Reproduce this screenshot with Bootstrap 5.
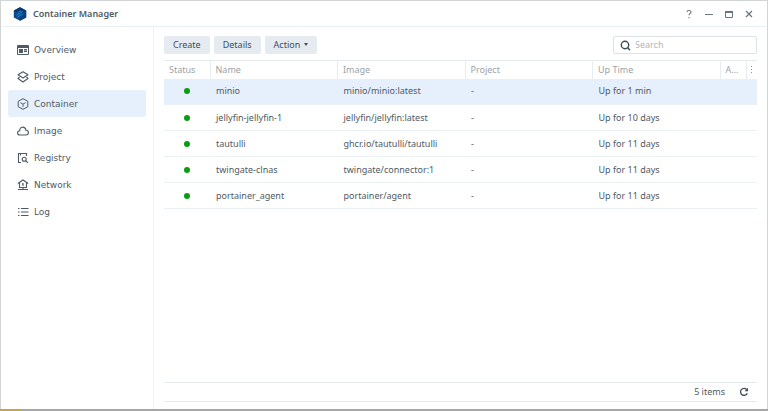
<!DOCTYPE html>
<html lang="en">
<head>
<meta charset="utf-8">
<meta name="viewport" content="width=device-width, initial-scale=1">
<title>Container Manager</title>
<link href="https://cdn.jsdelivr.net/npm/bootstrap@5.3.0/dist/css/bootstrap.min.css" rel="stylesheet">
<style>
body{font-family:"Noto Sans",Verdana,sans-serif;font-size:9px;line-height:12px;color:#505a64;padding-bottom:2px;background:linear-gradient(to right,#c4a548 21px,#a6a6a6 21px)}
.app-window{background:#fff;border:1px solid #d2d4d6;border-bottom:0}
.title-bar{height:26px;padding:0 8px 0 12px;border-bottom:1px solid #eaf2f6}
.title-bar .brand{gap:6px}
.title-bar h1{font-size:9px;line-height:12px;font-weight:600;color:#505a64}
.win-btn{width:20px;height:20px;color:#6b737b}
.win-btn,.refresh-btn{border:0;background:none;padding:0}
.side-nav{width:153px;padding:9px 7px;border-right:1px solid #eaf2f6}
.side-nav .nav-link{height:27px;padding:0 9px;gap:5px;font-family:"DejaVu Sans",Verdana,sans-serif;font-size:9px;line-height:12px;color:#505a64;border-radius:3px}
.side-nav .nav-link.active{background:#e5f0fc;color:#505a64}
.side-nav svg{width:12px;height:12px}
svg{display:block;flex:none}
.main-pane{padding:9px 10px 7px}
.tool-bar{gap:4px;margin-bottom:6px}
.tool-btn{height:18px;padding:0 9px;border:0;border-radius:2px;background:#e6ebf2;color:#414b55;font-size:9px;line-height:12px}
.tool-btn.dropdown-toggle::after{border-top-width:3px;border-left-width:2px;border-right-width:2px;vertical-align:2px;margin-left:4px}
.search-box{width:144px;height:18px;padding:0 6px;gap:4px;border:1px solid #dde3e8;border-radius:2px}
.search-box input{font-size:9px;line-height:12px;padding:0;border:0;background:none;color:#505a64;min-width:0}
.search-box input::placeholder{color:#b0b6bb}
.search-box input:focus{box-shadow:none}
.grid{table-layout:fixed;--bs-table-bg:transparent;color:#505a64;border-top:1px solid #e4e9ed}
.grid>thead th{height:18px;padding:0 5px;font-weight:400;color:#9ba2a8;border:0;border-right:1px solid #e8edf1;white-space:nowrap;overflow:hidden}
.grid>thead th:last-child{border-right:0;padding:0}
.grid>tbody td{height:26px;padding:0 6px;color:#505a64;border-bottom:1px solid #eaf1f5}
.grid .picked td{background:#e5f0fc}
.c-status{width:46px}.c-more{width:26px}.c-menu{width:11px}
.led{width:6px;height:6px;background:#0a9c12}
.status-bar{height:20px;padding-right:8px;gap:14px;border-top:1px solid #e8ebee;border-bottom:1px solid #e8ebee}
</style>
</head>
<body class="d-flex flex-column min-vh-100">
<div class="app-window d-flex flex-column flex-grow-1">
  <header class="title-bar d-flex align-items-center">
    <div class="brand d-flex align-items-center me-auto">
      <svg width="14" height="14" viewBox="0 0 14 14"><path d="M7 .3 13.2 3.6v6.8L7 13.7.8 10.4V3.6z" fill="#0a4a91"/><path d="M7 .3 13.2 3.6 7 7 .8 3.6z" fill="#0c3a70"/><path d="M7 7l6.2-3.4v6.8L7 13.7z" fill="#08417f"/><path d="M3.5 8.2 10 4.4M4.2 10.2l5.9-3.4M5 5.4l3-1.5" stroke="#2287cb" stroke-width="1"/></svg>
      <h1 class="mb-0">Container Manager</h1>
    </div>
    <button class="win-btn d-flex align-items-center justify-content-center" aria-label="Help"><svg width="10" height="10" viewBox="0 0 10 10" fill="none" stroke="currentColor" stroke-width="1.1"><path d="M3 3C3 1 7 .9 7 3c0 1.4-2 1.4-2 3.3M5 8v1.2"/></svg></button>
    <button class="win-btn d-flex align-items-center justify-content-center" aria-label="Minimize"><svg width="10" height="10" viewBox="0 0 10 10"><path d="M1 5.500h8" stroke="currentColor"/></svg></button>
    <button class="win-btn d-flex align-items-center justify-content-center" aria-label="Maximize"><svg width="10" height="10" viewBox="0 0 10 10" fill="none" stroke="currentColor"><path d="M1.500 2.500h7v6h-7z"/><path d="M1 3h8" stroke-width="2"/></svg></button>
    <button class="win-btn d-flex align-items-center justify-content-center" aria-label="Close"><svg width="10" height="10" viewBox="0 0 10 10"><path d="m2 2 6 6M8 2 2 8" stroke="currentColor" stroke-width="1.2"/></svg></button>
  </header>
  <div class="d-flex flex-grow-1">
    <nav class="side-nav nav flex-column flex-nowrap flex-shrink-0" aria-label="Sections">
      <a class="nav-link d-flex align-items-center" href="#"><svg viewBox="0 0 12 12"><path fill="none" stroke="currentColor" d="M.5 1.5h11v9H.5z"/><path fill="currentColor" d="M1 2h10v2H1zM2 5h4v4H2zM7 5h3v1.500H7zM7 7h3v1H7z"/></svg>Overview</a>
      <a class="nav-link d-flex align-items-center" href="#"><svg viewBox="0 0 12 12" fill="none" stroke="currentColor" stroke-width="1.1" stroke-linejoin="round"><path d="M6 .8 11 3.800 6 7 1 3.800zM2.500 6 1 7.500l5 3.500 5-3.500L9.500 6"/></svg>Project</a>
      <a class="nav-link active d-flex align-items-center" aria-current="page" href="#"><svg viewBox="0 0 12 12" fill="none" stroke="currentColor" stroke-linejoin="round"><path d="M6 .7 10.800 3.300v5.400L6 11.300 1.200 8.700V3.300z"/><path d="M3.300 4.700 6 6.100l2.700-1.400M6 6.100V9" stroke-width=".9"/></svg>Container</a>
      <a class="nav-link d-flex align-items-center" href="#"><svg viewBox="0 0 12 12" fill="none" stroke="currentColor" stroke-width="1.100"><path d="M3 10C-.3 10-.1 6 2.700 5.800 2.700 1.100 8.300 1 9 5.300c3.300.3 3.300 4.700-.2 4.700z"/></svg>Image</a>
      <a class="nav-link d-flex align-items-center" href="#"><svg viewBox="0 0 12 12" fill="none" stroke="currentColor" stroke-width="1.100"><path d="M4 10.500H1.500v-9h8V4M3.500 1.500v2"/><circle cx="7.200" cy="7.200" r="2"/><path d="m8.700 8.700 2.200 2.200"/></svg>Registry</a>
      <a class="nav-link d-flex align-items-center" href="#"><svg viewBox="0 0 12 12" fill="none" stroke="currentColor" stroke-width="1.100"><path d="M.8 4.500 6 1l5.200 3.500M2.500 4v4.500h7V4M1 10.500h10M6 8.500v2"/><path d="M6 4v3M5 5h1"/></svg>Network</a>
      <a class="nav-link d-flex align-items-center" href="#"><svg viewBox="0 0 12 12" stroke="currentColor" stroke-width="1.200"><path d="M1 2.500h1.500M4 2.500h7.500M1 6h1.500M4 6h7.500M1 9.500h1.500M4 9.500h7.500"/></svg>Log</a>
    </nav>
    <main class="main-pane d-flex flex-column flex-grow-1">
      <div class="tool-bar d-flex align-items-center">
        <button class="tool-btn btn">Create</button>
        <button class="tool-btn btn">Details</button>
        <button class="tool-btn btn dropdown-toggle">Action</button>
        <label class="search-box d-flex align-items-center ms-auto"><svg width="11" height="11" viewBox="0 0 11 11" fill="none" stroke="#414b55" stroke-width="1.400"><circle cx="5" cy="5" r="3.700"/><path d="m7.500 7.500 2.500 2.700"/></svg><input class="form-control" type="search" placeholder="Search" aria-label="Search"></label>
      </div>
      <table class="grid table mb-0">
        <colgroup><col class="c-status"><col><col><col><col><col class="c-more"><col class="c-menu"></colgroup>
        <thead class="align-middle"><tr><th>Status</th><th>Name</th><th>Image</th><th>Project</th><th>Up Time</th><th>A...</th><th><svg class="mx-auto" width="3" height="9" viewBox="0 0 3 9" fill="#8b9299"><path d="M1 1h1v1H1zM1 4h1v1H1zM1 7h1v1H1z"/></svg></th></tr></thead>
        <tbody class="align-middle">
          <tr class="picked"><td><div class="led rounded-circle mx-auto"></div></td><td>minio</td><td>minio/minio:latest</td><td>-</td><td>Up for 1 min</td><td></td><td></td></tr>
          <tr><td><div class="led rounded-circle mx-auto"></div></td><td>jellyfin-jellyfin-1</td><td>jellyfin/jellyfin:latest</td><td>-</td><td>Up for 10 days</td><td></td><td></td></tr>
          <tr><td><div class="led rounded-circle mx-auto"></div></td><td>tautulli</td><td>ghcr.io/tautulli/tautulli</td><td>-</td><td>Up for 11 days</td><td></td><td></td></tr>
          <tr><td><div class="led rounded-circle mx-auto"></div></td><td>twingate-clnas</td><td>twingate/connector:1</td><td>-</td><td>Up for 11 days</td><td></td><td></td></tr>
          <tr><td><div class="led rounded-circle mx-auto"></div></td><td>portainer_agent</td><td>portainer/agent</td><td>-</td><td>Up for 11 days</td><td></td><td></td></tr>
        </tbody>
      </table>
      <footer class="status-bar d-flex align-items-center justify-content-end mt-auto">
        <span>5 items</span>
        <button class="refresh-btn" aria-label="Refresh"><svg width="10" height="10" viewBox="0 0 10 10" fill="none" stroke="#414b55" stroke-width="1.300"><path d="M8.300 6.200A3.500 3.500 0 1 1 7.700 2.600"/><path d="M9 .8v3.400H5.600z" fill="#414b55" stroke="none"/></svg></button>
      </footer>
    </main>
  </div>
</div>
<script src="https://cdn.jsdelivr.net/npm/bootstrap@5.3.0/dist/js/bootstrap.bundle.min.js"></script>
</body>
</html>
